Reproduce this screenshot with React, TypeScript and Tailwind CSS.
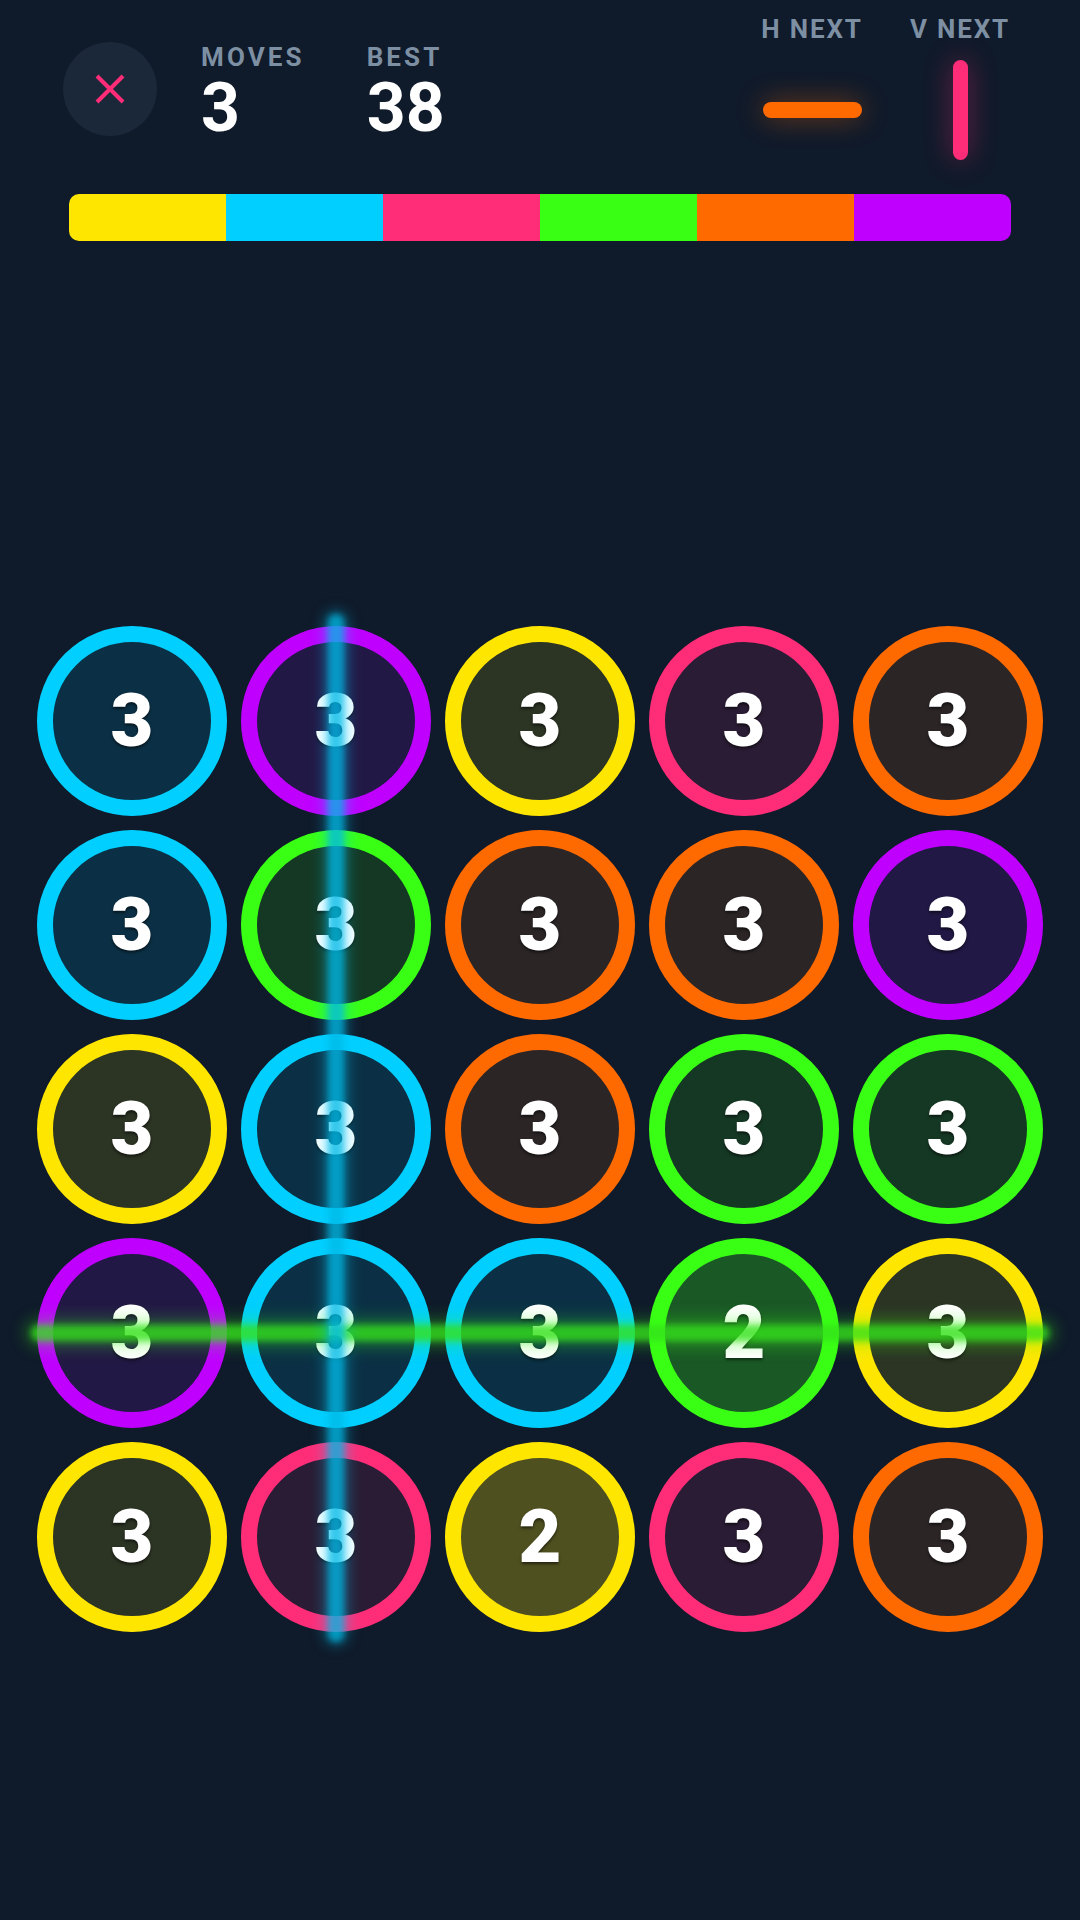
import React from "react";

type Tone = "cyan" | "purple" | "yellow" | "pink" | "orange" | "green";

// ring + inner fill, inner is the ring colour at low alpha over the background
const ring: Record<Tone, string> = {
  cyan: "border-[#00cfff] bg-[#0b3045]",
  purple: "border-[#bf00ff] bg-[#221845]",
  yellow: "border-[#ffe600] bg-[#2c3424]",
  pink: "border-[#ff2d78] bg-[#2a1c34]",
  orange: "border-[#ff6a00] bg-[#2b2526]",
  green: "border-[#39ff14] bg-[#153824]",
};

// cells with one hit left get a stronger fill
const ringLow: Partial<Record<Tone, string>> = {
  yellow: "border-[#ffe600] bg-[#4f5020]",
  green: "border-[#39ff14] bg-[#1a5826]",
};

const board: [Tone, number][][] = [
  [["cyan", 3], ["purple", 3], ["yellow", 3], ["pink", 3], ["orange", 3]],
  [["cyan", 3], ["green", 3], ["orange", 3], ["orange", 3], ["purple", 3]],
  [["yellow", 3], ["cyan", 3], ["orange", 3], ["green", 3], ["green", 3]],
  [["purple", 3], ["cyan", 3], ["cyan", 3], ["green", 2], ["yellow", 3]],
  [["yellow", 3], ["pink", 3], ["yellow", 2], ["pink", 3], ["orange", 3]],
];

const palette = [
  "bg-[#ffe600]",
  "bg-[#00cfff]",
  "bg-[#ff2d78]",
  "bg-[#39ff14]",
  "bg-[#ff6a00]",
  "bg-[#bf00ff]",
];

function Stat({ label, value }: { label: string; value: string }) {
  return (
    <div className="flex flex-col pt-[2px]">
      <span className="text-[26px] leading-none font-bold tracking-[0.12em] text-[#7d8fa2]">
        {label}
      </span>
      <span className="mt-[4px] text-[68px] leading-none font-bold text-white">
        {value}
      </span>
    </div>
  );
}

function Cell({ tone, hits }: { tone: Tone; hits: number }) {
  const cls = hits < 3 && ringLow[tone] ? ringLow[tone] : ring[tone];
  return (
    <div
      className={`flex h-[190px] w-[190px] items-center justify-center rounded-full border-[16px] ${cls}`}
    >
      <span className="text-[74px] leading-none font-black text-white [text-shadow:0_2px_3px_rgba(0,0,0,0.55)]">
        {hits}
      </span>
    </div>
  );
}

export default function App() {
  return (
    <div className="relative h-[1920px] w-[1080px] overflow-hidden bg-[#0f1a2a] font-[Roboto,sans-serif]">
      {/* header */}
      <div className="flex items-start justify-between">
        <div className="flex items-start pt-[42px] pl-[63px]">
          <button className="flex h-[94px] w-[94px] items-center justify-center rounded-full bg-[#1b2839]">
            <svg width="30" height="30" viewBox="0 0 30 30">
              <path
                d="M2 2 L28 28 M28 2 L2 28"
                stroke="#ff2d78"
                strokeWidth="4"
                fill="none"
              />
            </svg>
          </button>
          <div className="ml-[44px] flex gap-[62px]">
            <Stat label="MOVES" value="3" />
            <Stat label="BEST" value="38" />
          </div>
        </div>

        <div className="flex gap-[28px] pt-[16px] pr-[60px]">
          <div className="flex w-[120px] flex-col items-center">
            <span className="text-[26px] leading-none font-bold tracking-[0.07em] text-[#7d8fa2]">
              H NEXT
            </span>
            <div className="mt-[18px] flex h-[100px] items-center justify-center">
              <div className="h-[16px] w-[99px] rounded-full bg-[#ff6a00] shadow-[0_0_28px_rgba(255,106,0,0.45)]" />
            </div>
          </div>
          <div className="flex w-[120px] flex-col items-center">
            <span className="text-[26px] leading-none font-bold tracking-[0.07em] text-[#7d8fa2]">
              V NEXT
            </span>
            <div className="mt-[18px] flex h-[100px] items-center justify-center">
              <div className="h-[100px] w-[15px] rounded-full bg-[#ff2d78] shadow-[0_0_28px_rgba(255,45,120,0.45)]" />
            </div>
          </div>
        </div>
      </div>

      {/* colour strip */}
      <div className="mt-[34px] ml-[69px] flex h-[47px] w-[942px] overflow-hidden rounded-[10px]">
        {palette.map((c) => (
          <div key={c} className={`flex-1 ${c}`} />
        ))}
      </div>

      {/* board */}
      <div className="mt-[385px] flex justify-center">
        <div className="relative grid grid-cols-[repeat(5,190px)] gap-[14px]">
          {board.flat().map(([tone, hits], i) => (
            <Cell key={i} tone={tone} hits={hits} />
          ))}

          {/* horizontal laser, row 4 */}
          <div className="pointer-events-none absolute top-[693px] right-[-12px] left-[-12px] h-[28px] rounded-full bg-[#39ff14]/30 blur-[8px]" />
          <div className="pointer-events-none absolute top-[699px] right-[-6px] left-[-6px] h-[16px] rounded-full bg-[#34e01c]/75 blur-[3px]" />

          {/* vertical laser, column 2 */}
          <div className="pointer-events-none absolute top-[-16px] bottom-[-14px] left-[286px] w-[26px] rounded-full bg-[#00cfff]/30 blur-[7px]" />
          <div className="pointer-events-none absolute top-[-12px] bottom-[-10px] left-[291px] w-[16px] rounded-full bg-[#00b8e6]/70 blur-[3px]" />
        </div>
      </div>
    </div>
  );
}
